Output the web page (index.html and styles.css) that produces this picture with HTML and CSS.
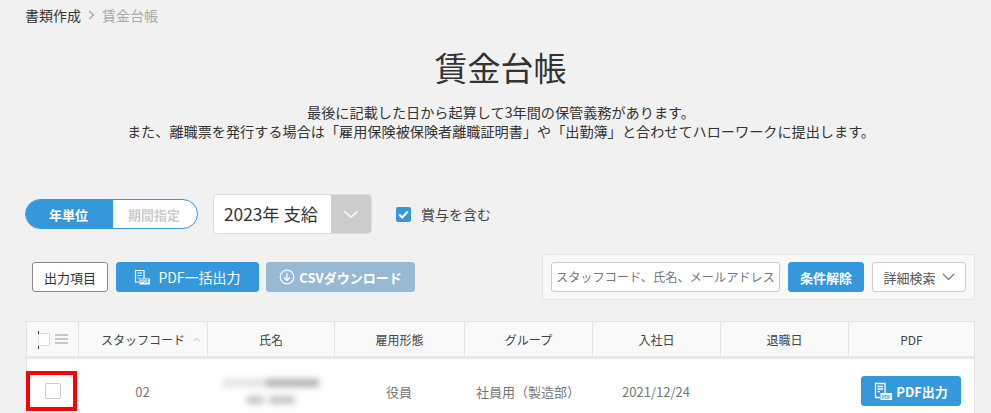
FILE: index.html
```html
<!DOCTYPE html>
<html lang="ja">
<head>
<meta charset="utf-8">
<title>賃金台帳</title>
<link rel="stylesheet" href="styles.css">
</head>
<body>
<nav class="crumbs"><span class="crumb-link">書類作成</span><svg class="crumb-sep" width="7" height="10" viewBox="0 0 7 10"><path d="M1 1l4.500 4L1 9" fill="none" stroke="#aaa" stroke-width="1.300"/></svg><span class="crumb-now">賃金台帳</span></nav>
<h1 class="title">賃金台帳</h1>
<div class="desc">
<p>最後に記載した日から起算して3年間の保管義務があります。</p>
<p>また、離職票を発行する場合は「雇用保険被保険者離職証明書」や「出勤簿」と合わせてハローワークに提出します。</p>
</div>
<div class="filters">
<div class="toggle"><span class="toggle-on">年単位</span><span class="toggle-off">期間指定</span></div>
<div class="select"><span class="select-value">2023年 支給</span><span class="select-arrow"><svg width="16" height="9" viewBox="0 0 16 9"><path d="M1.500 1.500L8 7l6.500-5.500" fill="none" stroke="#fff" stroke-width="1.500"/></svg></span></div>
<label class="bonus"><span class="check-on"><svg width="11" height="9" viewBox="0 0 11 9"><path d="M1.200 4.500L4.200 7.500 9.800 1.500" fill="none" stroke="#fff" stroke-width="2"/></svg></span>賞与を含む</label>
</div>
<div class="toolbar">
<div class="actions">
<button class="btn btn-outline">出力項目</button>
<button class="btn btn-pdf"><svg class="pdf-icon" width="16" height="16" viewBox="0 0 16 16"><path d="M10 10V1.500H1.500V13H5M3.500 4h4.500M3.500 6.500h4.500M3.500 9h2" fill="none" stroke="#fff" stroke-width="1.200"/><rect x="5.500" y="9.500" width="10.500" height="6" fill="#fff"/><text class="pdf-tag" x="10.700" y="14.300">PDF</text></svg>PDF一括出力</button>
<button class="btn btn-csv"><svg width="16" height="16" viewBox="0 0 16 16"><circle cx="8" cy="8" r="6.800" fill="none" stroke="#fff" stroke-width="1.200"/><path d="M8 4v7.500M5 8.500l3 3 3-3" fill="none" stroke="#fff" stroke-width="1.200"/></svg>CSVダウンロード</button>
</div>
<div class="search">
<span class="search-input">スタッフコード、氏名、メールアドレス</span>
<button class="btn btn-clear">条件解除</button>
<button class="btn btn-detail">詳細検索<svg width="13" height="8" viewBox="0 0 13 8"><path d="M1 1l5.500 5.500L12 1" fill="none" stroke="#777" stroke-width="1.200"/></svg></button>
</div>
</div>
<div class="table">
<div class="row head">
<div class="cell"><span class="head-check"></span><svg width="13" height="10" viewBox="0 0 13 10"><path d="M0 1h13M0 5h13M0 9h13" stroke="#b5b5b5" stroke-width="1.400"/></svg></div>
<div class="cell sort">スタッフコード<svg class="sort-icon" width="7" height="5" viewBox="0 0 7 5"><path d="M.5 4L3.500 1l3 3" fill="none" stroke="#bbb"/></svg></div>
<div class="cell">氏名</div>
<div class="cell">雇用形態</div>
<div class="cell">グループ</div>
<div class="cell">入社日</div>
<div class="cell">退職日</div>
<div class="cell">PDF</div>
</div>
<div class="row body">
<div class="cell mark-cell"><span class="check-off"></span><span class="mark"></span></div>
<div class="cell">02</div>
<div class="cell"><div class="blurred"><span class="blur-a"></span><span class="blur-b"></span></div></div>
<div class="cell">役員</div>
<div class="cell">社員用（製造部）</div>
<div class="cell">2021/12/24</div>
<div class="cell"></div>
<div class="cell"><button class="btn btn-row"><svg class="pdf-icon" width="18" height="19" viewBox="0 0 18 19"><path d="M11 11V1.500H1.500V15.500H6M3.500 4.500h5.500M3.500 7h5.500M3.500 9.500h2.500" fill="none" stroke="#fff" stroke-width="1.300"/><rect x="6.500" y="11" width="11.500" height="7" fill="#fff"/><text class="pdf-tag" x="12.200" y="16.500">PDF</text></svg>PDF出力</button></div>
</div>
</div>
</body>
</html>
```
FILE: styles.css
```css
* { box-sizing: border-box; }
html, body { margin: 0; height: 413px; overflow: hidden; }
body {
  background: #f1f1f1;
  color: #333;
  font-family: "Noto Sans CJK JP", "Noto Sans", sans-serif;
  font-size: 14px;
}
p { margin: 0; }
button { font-family: inherit; cursor: pointer; }

.crumbs { display: flex; align-items: center; height: 18px; margin: 6px 0 0 25px; font-size: 14px; line-height: 18px; }
.crumb-link { color: #333; }
.crumb-sep { margin: 0 7px 0 7px; }
.crumb-now { color: #aaa; }

.title { margin: 20px 0 0; padding-left: 10px; text-align: center; font-size: 33px; font-weight: 400; line-height: 46px; color: #333; }

.desc { margin-top: 13px; padding-left: 11px; text-align: center; font-size: 14.150px; line-height: 19px; color: #333; }

.filters { display: flex; align-items: center; margin: 53px 0 0 25px; height: 40px; }
.toggle { display: flex; width: 173px; height: 30px; border: 1px solid #3498db; border-radius: 15px; overflow: hidden; background: #fff; font-size: 13px; font-weight: 700; }
.toggle-on { display: flex; width: 87px; padding-right: 2px; align-items: center; justify-content: center; background: #3498db; color: #fff; }
.toggle-off { display: flex; flex: 1; padding-right: 2px; align-items: center; justify-content: center; color: #ccc; }
.select { display: flex; width: 159px; height: 40px; margin-left: 15px; border: 1px solid #ddd; border-radius: 4px; overflow: hidden; background: #fff; }
.select-value { flex: 1; padding-left: 10px; font-size: 17.300px; line-height: 38px; color: #333; white-space: nowrap; }
.select-arrow { display: flex; flex: none; width: 40px; align-items: center; justify-content: center; background: #ccc; }
.bonus { display: flex; align-items: center; gap: 10px; margin-left: 24px; font-size: 14px; color: #444; }
.check-on { display: flex; width: 15px; height: 15px; align-items: center; justify-content: center; border-radius: 2px; background: #3498db; }

.toolbar { display: flex; justify-content: space-between; align-items: center; height: 46px; margin: 20px 16px 0 32px; }
.actions { display: flex; }
.btn { display: inline-flex; align-items: center; justify-content: center; height: 30px; padding: 0; border: 1px solid #ddd; border-radius: 3px; font-size: 14px; line-height: 1; }
.btn-outline { width: 76px; border-color: #888; background: #fff; color: #333; font-size: 13px; }
.btn-pdf { width: 143px; margin-left: 8px; gap: 8px; border-color: #3498db; background: #3498db; color: #fff; }
.btn-csv { width: 149px; margin-left: 7px; gap: 4px; border-color: #98b9d3; background: #98b9d3; color: #fff; font-weight: 700; font-size: 13px; }
.pdf-tag { fill: #3498db; font-family: "Liberation Sans", sans-serif; font-size: 4.500px; font-weight: 700; text-anchor: middle; }
.search { display: flex; align-items: center; width: 433px; height: 46px; padding: 0 8px; border: 1px solid #e4e4e4; border-radius: 4px; background: #f8f8f8; }
.search-input { display: block; flex: none; width: 229px; height: 30px; padding-left: 4px; border: 1px solid #ccc; border-radius: 3px; background: #fff; color: #777; font-size: 12.200px; line-height: 28px; white-space: nowrap; overflow: hidden; }
.btn-clear { width: 77px; margin-left: 8px; border-color: #3498db; background: #3498db; color: #fff; font-size: 13px; font-weight: 700; }
.btn-detail { width: 95px; margin-left: 8px; gap: 6px; border-color: #ccc; background: #fff; color: #555; font-size: 13px; }

.table { margin: 21px 16px 0 26px; border: 1px solid #e3e3e3; border-bottom: 0; background: #fff; }
.row { display: grid; grid-template-columns: 51px 129px 127px 130px 128px 128px 128px 1fr; }
.cell { display: flex; align-items: center; justify-content: center; color: #777; font-size: 13px; }
.head { height: 37px; border-bottom: 3px solid #e8e8e8; background: #f9f9f9; }
.head .cell { color: #444; font-size: 12px; border-left: 1px solid #e3e3e3; }
.head .cell:first-child { border-left: 0; gap: 5px; }
.sort-icon { margin: 0 -15px 0 8px; }
.head-check { position: relative; display: block; width: 12px; height: 13px; border: 1px solid #ddd; border-left: 0; background: #fff; }
.head-check::before { content: ""; position: absolute; left: 0; top: -3px; width: 1px; height: 18px; background: linear-gradient(#333 0 3px, #ddd 3px 15px, #333 15px); }
.body { height: 64px; }
.mark-cell { position: relative; }
.check-off { display: block; width: 16px; height: 16px; border: 1px solid #ccc; border-radius: 2px; background: #fff; }
.mark { position: absolute; left: -1px; top: 12px; width: 51px; height: 40px; border: 4px solid #f00; }
.blurred { display: flex; flex-direction: column; align-items: center; gap: 9px; filter: blur(3px); }
.blur-a { display: block; width: 96px; height: 8px; background: linear-gradient(90deg, #e2e2e2 0 45%, #b0b0b0 45% 100%); }
.blur-b { display: block; width: 48px; height: 8px; background: linear-gradient(90deg, #c4c4c4 0 35%, #fff 35% 45%, #c4c4c4 45% 100%); }
.btn-row { width: 100px; gap: 4px; border-color: #3498db; background: #3498db; color: #fff; font-size: 13px; font-weight: 700; }
```
